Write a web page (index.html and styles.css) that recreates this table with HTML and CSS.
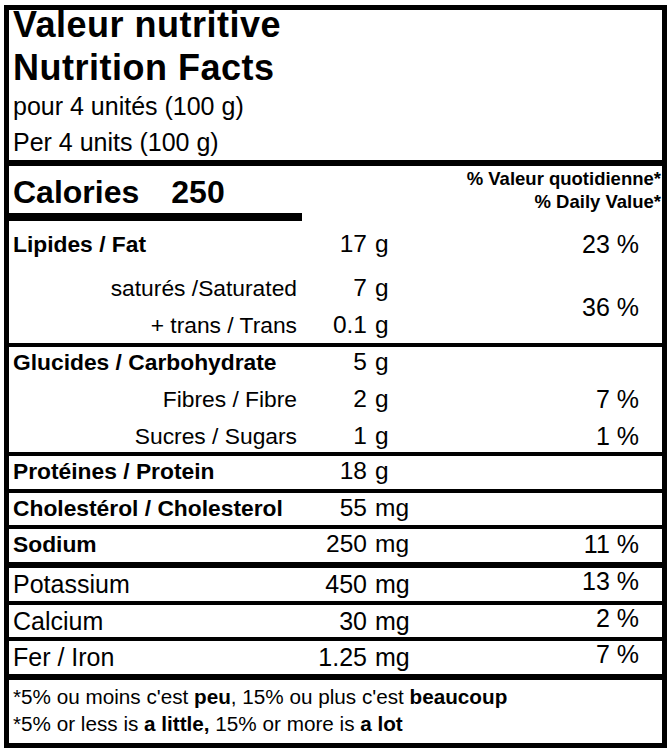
FILE: index.html
```html
<!DOCTYPE html>
<html lang="fr">
<head>
<meta charset="utf-8">
<title>Valeur nutritive / Nutrition Facts</title>
<link rel="stylesheet" href="styles.css">
</head>
<body>
<div class="label">
  <header class="head">
    <h1 class="title">Valeur nutritive<br>Nutrition Facts</h1>
    <p class="serving">pour 4 unités (100 g)</p>
    <p class="serving">Per 4 units (100 g)</p>
  </header>

  <div class="cal-row">
    <div class="cal"><span>Calories</span><span class="cal-num">250</span></div>
    <div class="dv">
      <div>% Valeur quotidienne*</div>
      <div>% Daily Value*</div>
    </div>
  </div>

  <div class="sec sec-fat">
    <div class="name b first">Lipides / Fat</div><div class="num first">17</div><div class="unit first">g</div><div class="pct first">23 %</div>
    <div class="name sub">saturés /Saturated</div><div class="num">7</div><div class="unit">g</div><div class="pct span2">36 %</div>
    <div class="name sub">+ trans / Trans</div><div class="num">0.1</div><div class="unit">g</div>
  </div>

  <div class="sec sec-carb">
    <div class="name b">Glucides / Carbohydrate</div><div class="num">5</div><div class="unit">g</div>
    <div class="name sub">Fibres / Fibre</div><div class="num">2</div><div class="unit">g</div><div class="pct">7 %</div>
    <div class="name sub">Sucres / Sugars</div><div class="num">1</div><div class="unit">g</div><div class="pct">1 %</div>
  </div>

  <div class="sec one">
    <div class="name b">Protéines / Protein</div><div class="num">18</div><div class="unit">g</div>
  </div>

  <div class="sec one short">
    <div class="name b">Cholestérol / Cholesterol</div><div class="num">55</div><div class="unit">mg</div>
  </div>

  <div class="sec one">
    <div class="name b">Sodium</div><div class="num">250</div><div class="unit">mg</div><div class="pct">11 %</div>
  </div>

  <div class="sec min thick">
    <div class="name">Potassium</div><div class="num">450</div><div class="unit">mg</div><div class="pct">13 %</div>
  </div>

  <div class="sec min short">
    <div class="name">Calcium</div><div class="num">30</div><div class="unit">mg</div><div class="pct">2 %</div>
  </div>

  <div class="sec min">
    <div class="name">Fer / Iron</div><div class="num">1.25</div><div class="unit">mg</div><div class="pct">7 %</div>
  </div>

  <footer class="foot">
    <p>*5% ou moins c'est <b>peu</b>, 15% ou plus c'est <b>beaucoup</b></p>
    <p>*5% or less is <b>a little,</b> 15% or more is <b>a lot</b></p>
  </footer>
</div>
</body>
</html>
```

FILE: styles.css
```css
* {
  box-sizing: border-box;
}

body {
  margin: 0;
  background: #fff;
  color: #000;
  font-family: "Liberation Sans", Arial, sans-serif;
}

.label {
  margin: 5px 0 0 4px;
  width: 663px;
  border: 5px solid #000;
}

/* header */
.head {
  padding-left: 4px;
  border-bottom: 6px solid #000;
}

.title {
  margin: -7px 0 0;
  font-size: 36px;
  font-weight: bold;
  line-height: 43px;
  letter-spacing: 0.5px;
}

.serving {
  margin: 0;
  font-size: 25px;
  line-height: 35.5px;
}

/* calories */
.cal-row {
  display: flex;
  justify-content: space-between;
  align-items: flex-start;
}

.cal {
  width: 293px;
  padding: 5px 0 0 4px;
  border-bottom: 8px solid #000;
  font-size: 32px;
  font-weight: bold;
  line-height: 42px;
}

.cal-num {
  margin-left: 32px;
}

.dv {
  padding: 1px 1px 0 0;
  text-align: right;
  font-size: 18.5px;
  font-weight: bold;
  line-height: 23px;
}

/* nutrient sections */
.sec {
  display: grid;
  grid-template-columns: 292px 66px 1fr 150px;
  row-gap: 7px;
  padding: 0 23px 3px 0;
  border-top: 4px solid #000;
  font-size: 22.8px;
  line-height: 30px;
}

.sec.short {
  padding-bottom: 2px;
}

.sec-fat {
  border-top: 0;
  padding-top: 8px;
  padding-bottom: 3px;
}

.sec-fat .first {
  margin-bottom: 7px;
}

.sec-carb {
  padding-bottom: 1px;
}

.name {
  grid-column: 1;
  padding-left: 4px;
  white-space: nowrap;
}

.name.b {
  font-weight: bold;
}

.name.sub {
  text-align: right;
  padding: 0 4px 0 0;
}

.num,
.unit {
  font-size: 24.5px;
}

.num {
  text-align: right;
}

.unit {
  padding-left: 8px;
}

.pct {
  grid-column: 4;
  text-align: right;
  font-size: 25px;
}

.pct.span2 {
  grid-row: span 2;
  align-self: center;
}

/* minerals */
.sec.min {
  font-size: 25px;
  padding-top: 1px;
  padding-bottom: 2px;
}

.sec.min .num,
.sec.min .unit {
  font-size: 25px;
}

.sec.min.short {
  padding-bottom: 1px;
}

.sec.min .pct {
  line-height: 24px;
}

.sec.thick {
  border-top-width: 6px;
}

/* footnote */
.foot {
  border-top: 6px solid #000;
  padding: 3px 0 6px 4px;
  font-size: 20.7px;
  line-height: 27px;
}

.foot p {
  margin: 0;
}
```
